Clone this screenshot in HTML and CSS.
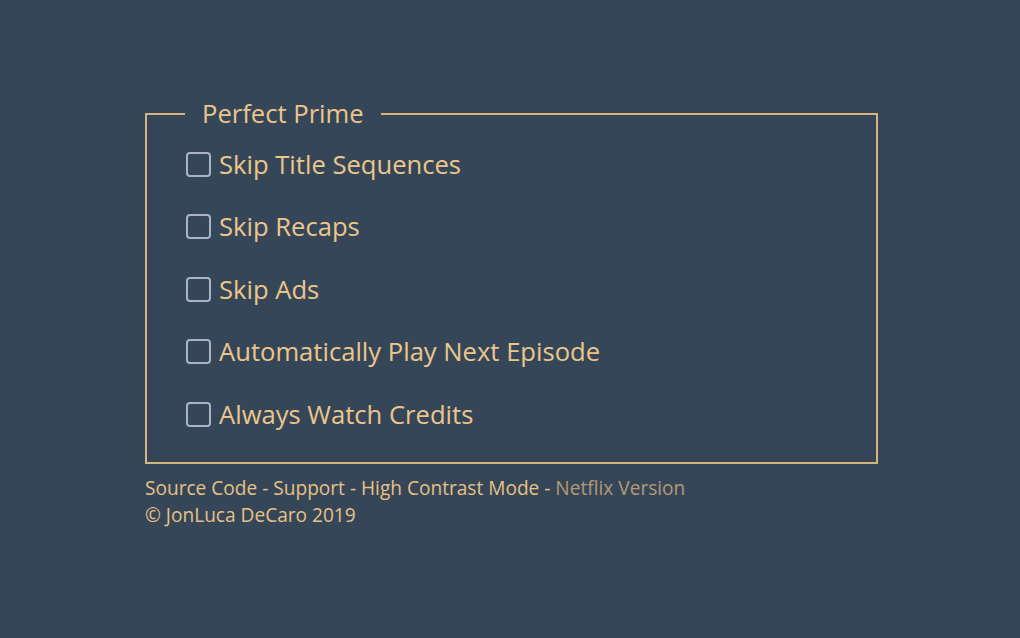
FILE: index.html
```html
<!DOCTYPE html>
<html>
<head>
<meta charset="utf-8">
<link rel="stylesheet" href="styles.css">
</head>
<body>
<main class="wrap">
  <fieldset class="box">
    <legend class="title">Perfect Prime</legend>
    <label class="opt"><span class="check"></span><span>Skip Title Sequences</span></label>
    <label class="opt"><span class="check"></span><span>Skip Recaps</span></label>
    <label class="opt"><span class="check"></span><span>Skip Ads</span></label>
    <label class="opt"><span class="check"></span><span>Automatically Play Next Episode</span></label>
    <label class="opt"><span class="check"></span><span>Always Watch Credits</span></label>
  </fieldset>
  <footer class="foot">
    <div>Source Code - Support - High Contrast Mode - <span class="dim">Netflix Version</span></div>
    <div>© JonLuca DeCaro 2019</div>
  </footer>
</main>
</body>
</html>
```

FILE: styles.css
```css
html, body {
  margin: 0;
  padding: 0;
  background: #364659;
  height: 100%;
}
body {
  font-family: "Open Sans", "Noto Sans", sans-serif;
  color: #ebc68b;
}
.wrap {
  padding: 99px 0 0 145px;
  width: 733px;
}
.box {
  margin: 0;
  border: 2px solid #d8b47d;
  padding: 4px 0 16px 38px;
  display: flex;
  flex-direction: column;
}
.title {
  font-size: 25.6px;
  padding: 0 17px;
  line-height: 30px;
}
.opt {
  display: flex;
  align-items: center;
  gap: 8px;
  font-size: 25.6px;
  height: 62.5px;
}
.check {
  box-sizing: border-box;
  width: 25px;
  height: 25px;
  border: 2px solid #a9b4c4;
  border-radius: 4px;
  margin-left: 1px;
}
.foot {
  font-size: 19.1px;
  line-height: 27px;
  padding-top: 11px;
  color: #e6c185;
}
.dim {
  color: #b39a73;
}
```
